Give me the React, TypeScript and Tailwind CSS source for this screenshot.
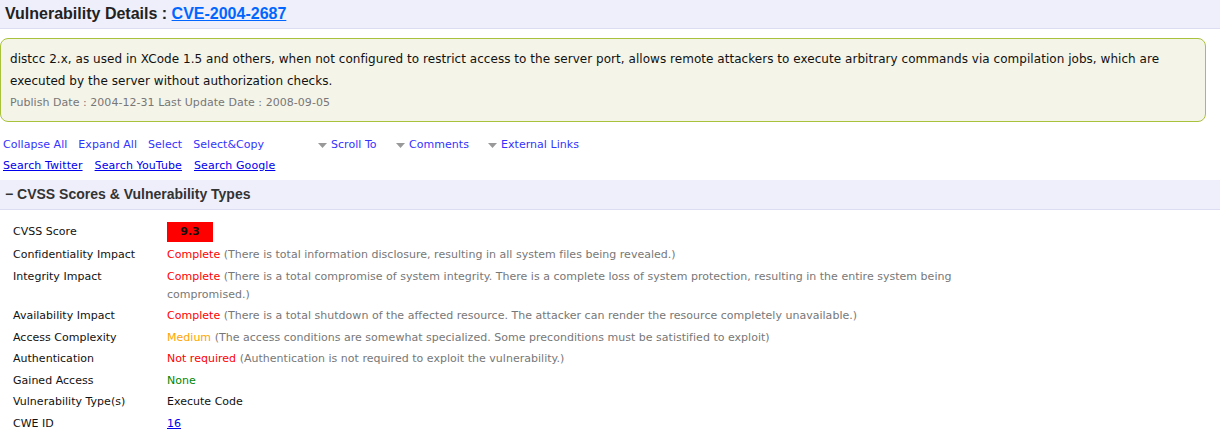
const body = { fontFamily: '"DejaVu Sans", Verdana, sans-serif' };
const head = { fontFamily: '"Liberation Sans", Arial, sans-serif' };

const topLinks = ["Collapse All", "Expand All", "Select", "Select&Copy"];
const menus = ["Scroll To", "Comments", "External Links"];
const searches = ["Search Twitter", "Search YouTube", "Search Google"];

type Row = { label: string; value: string; tone?: string; note?: string; link?: boolean };

const rows: Row[] = [
  {
    label: "Confidentiality Impact",
    value: "Complete",
    tone: "text-[#ff0000]",
    note: "(There is total information disclosure, resulting in all system files being revealed.)",
  },
  {
    label: "Integrity Impact",
    value: "Complete",
    tone: "text-[#ff0000]",
    note: "(There is a total compromise of system integrity. There is a complete loss of system protection, resulting in the entire system being compromised.)",
  },
  {
    label: "Availability Impact",
    value: "Complete",
    tone: "text-[#ff0000]",
    note: "(There is a total shutdown of the affected resource. The attacker can render the resource completely unavailable.)",
  },
  {
    label: "Access Complexity",
    value: "Medium",
    tone: "text-[#ffa500]",
    note: "(The access conditions are somewhat specialized. Some preconditions must be satistified to exploit)",
  },
  {
    label: "Authentication",
    value: "Not required",
    tone: "text-[#ff0000]",
    note: "(Authentication is not required to exploit the vulnerability.)",
  },
  { label: "Gained Access", value: "None", tone: "text-[#008800]" },
  { label: "Vulnerability Type(s)", value: "Execute Code", tone: "text-[#111]" },
  { label: "CWE ID", value: "16", link: true },
];

function Caret() {
  return (
    <svg width="9" height="5" viewBox="0 0 9 5" className="mr-[4px] mt-[1px]">
      <path d="M0 0h9L4.5 5z" fill="#999" />
    </svg>
  );
}

export default function App() {
  return (
    <div className="w-[1220px] h-[441px] overflow-hidden bg-white text-[#222] tracking-[0.04px]" style={body}>
      <div className="h-[29px] bg-[#efeffb] border-b border-[#dcdcf2] px-[5px] flex items-center">
        <h1 className="text-[16px] font-bold text-[#222] leading-none tracking-normal" style={head}>
          Vulnerability Details :{" "}
          <a href="#" className="text-[#0066ff] underline">
            CVE-2004-2687
          </a>
        </h1>
      </div>

      <div className="mt-[9px] w-[1206px] h-[84px] rounded-[8px] border border-[#a9c23c] bg-[#f4f4e9] px-[9px] pt-[9px]">
        <div className="text-[12px] leading-[22px] text-[#111]">
          distcc 2.x, as used in XCode 1.5 and others, when not configured to restrict access to the server port, allows
          remote attackers to execute arbitrary commands via compilation jobs, which are executed by the server without
          authorization checks.
        </div>
        <div className="text-[11px] leading-[22px] text-[#777]">
          Publish Date : 2004-12-31 Last Update Date : 2008-09-05
        </div>
      </div>

      <div className="mt-[12px] px-[3px] text-[11px] leading-[21px] text-[#3333ff]">
        <div className="flex">
          <div className="flex gap-[11px] w-[315px]">
            {topLinks.map((t) => (
              <a key={t} href="#">
                {t}
              </a>
            ))}
          </div>
          <div className="flex items-center">
            {menus.map((m, i) => (
              <span key={m} className={`flex items-center ${i === 0 ? "w-[78px]" : i === 1 ? "w-[92px]" : ""}`}>
                <Caret />
                <a href="#">{m}</a>
              </span>
            ))}
          </div>
        </div>
        <div className="flex gap-[12px] text-[#0000ee] tracking-[0.1px]">
          {searches.map((s) => (
            <a key={s} href="#" className="underline">
              {s}
            </a>
          ))}
        </div>
      </div>

      <div className="mt-[4px] h-[30px] bg-[#efeffb] border-b border-[#dcdcf2] px-[5px] flex items-center">
        <h2 className="text-[14px] font-bold text-[#333] tracking-normal" style={head}>
          − CVSS Scores &amp; Vulnerability Types
        </h2>
      </div>

      <div className="px-[13px] pt-[12.5px] text-[11px] leading-[18px] tracking-[0.02px]">
        <div className="flex h-[22px]">
          <div className="w-[154px] text-[#111] mt-[0.5px]">CVSS Score</div>
          <div className="w-[46px] h-[20px] -mt-[0.5px] bg-[#ff0000] text-[#111] font-bold flex items-center justify-center">
            9.3
          </div>
        </div>
        {rows.map((r) => (
          <div key={r.label} className="flex py-[1.75px]">
            <div className="w-[154px] shrink-0 text-[#111]">{r.label}</div>
            <div className="w-[800px]">
              {r.link ? (
                <a href="#" className="text-[#0000ee] underline">
                  {r.value}
                </a>
              ) : (
                <span className={r.tone}>{r.value}</span>
              )}
              {r.note && <span className="text-[#777]"> {r.note}</span>}
            </div>
          </div>
        ))}
      </div>
    </div>
  );
}
